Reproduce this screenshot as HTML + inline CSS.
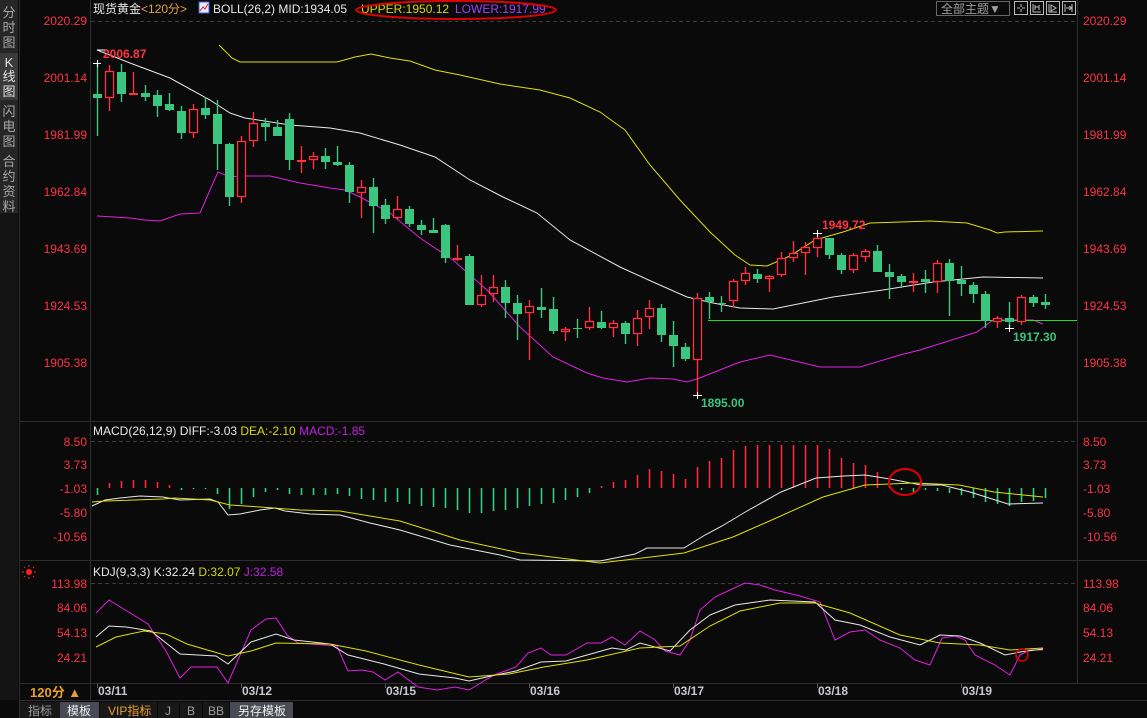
<!DOCTYPE html>
<html><head><meta charset="utf-8">
<style>
html,body{margin:0;padding:0;background:#0a0a0a;width:1147px;height:718px;overflow:hidden}
svg{display:block}
text{font-family:"Liberation Sans","Noto Sans CJK SC",sans-serif}
.c{shape-rendering:crispEdges}
</style></head><body>
<svg width="1147" height="718" viewBox="0 0 1147 718" xmlns="http://www.w3.org/2000/svg">
<rect width="1147" height="718" fill="#0a0a0a"/>
<!-- sidebar -->
<rect x="0" y="0" width="18" height="700" fill="#141414"/>
<rect x="0" y="0" width="18" height="213" fill="#262626"/>
<rect x="0" y="53" width="18" height="47" fill="#3a3a3a"/>
<g fill="#a8a8a8" font-size="13" text-anchor="middle">
<text x="9" y="17">分</text><text x="9" y="32">时</text><text x="9" y="47">图</text>
<text x="9" y="67" fill="#e0e0e0">K</text><text x="9" y="81" fill="#e0e0e0">线</text><text x="9" y="96" fill="#e0e0e0">图</text>
<text x="9" y="116">闪</text><text x="9" y="131">电</text><text x="9" y="146">图</text>
<text x="9" y="166">合</text><text x="9" y="181">约</text><text x="9" y="196">资</text><text x="9" y="211">料</text>
</g>
<!-- frame lines -->
<g stroke="#2e2e2e" stroke-width="1" class="c">
<line x1="90.5" y1="0" x2="90.5" y2="700"/>
<line x1="19.5" y1="0" x2="19.5" y2="718"/>
<line x1="1077.5" y1="0" x2="1077.5" y2="684"/>
<line x1="19" y1="421.5" x2="1147" y2="421.5"/>
<line x1="19" y1="560.5" x2="1147" y2="560.5"/>
<line x1="19" y1="683.5" x2="1147" y2="683.5"/>
<line x1="19" y1="700.5" x2="1147" y2="700.5"/>
</g>
<g stroke="#3a3a3a" stroke-dasharray="4,3" class="c">
<line x1="91" y1="21.5" x2="1077" y2="21.5"/>
<line x1="91" y1="441.5" x2="1077" y2="441.5"/>
<line x1="91" y1="583.5" x2="1077" y2="583.5"/>
</g>
<!-- header -->
<text x="93" y="13" font-size="12" fill="#e8e8e8">现货黄金<tspan fill="#e0a040">&lt;120分&gt;</tspan></text>
<rect x="199" y="2" width="10" height="11" fill="#e8e8ff" stroke="#4060d0"/>
<path d="M200 11L203 7L205 9L208 4" stroke="#d02020" fill="none"/>
<text x="213" y="13" font-size="12" fill="#e8e8e8">BOLL(26,2) MID:1934.05</text>
<text x="361" y="13" font-size="12" fill="#d8d800">UPPER:1950.12</text>
<text x="455" y="13" font-size="12" fill="#a040ff">LOWER:1917.99</text>
<ellipse cx="456" cy="10" rx="100" ry="9" fill="none" stroke="#e00000" stroke-width="2"/>
<!-- top right -->
<rect x="936.5" y="1.5" width="73" height="14" fill="none" stroke="#666"/>
<text x="941" y="13" font-size="12" fill="#a0a0a0">全部主题▼</text>
<g stroke="#bbb" fill="none">
<rect x="1014.5" y="1.5" width="13" height="13"/><path d="M1021 4v3M1021 9v3M1017 8h3M1022 8h3"/>
<rect x="1030.5" y="1.5" width="13" height="13"/><path d="M1033 4v8h8M1035 5v5M1039 5v5M1035 7h4"/>
<rect x="1046.5" y="1.5" width="13" height="13"/><path d="M1049 4v8h8M1051 5l5 3-5 3z"/>
<rect x="1062.5" y="1.5" width="13" height="13"/><path d="M1065 4v8M1066 8h5M1069 6l3 2-3 2M1072 4v8"/>
</g>
<!-- price axes -->
<g font-size="12" fill="#ff3344">
<g text-anchor="end">
<text x="87" y="25">2020.29</text><text x="87" y="82">2001.14</text><text x="87" y="139">1981.99</text><text x="87" y="196">1962.84</text><text x="87" y="253">1943.69</text><text x="87" y="310">1924.53</text><text x="87" y="367">1905.38</text>
<text x="87" y="446">8.50</text><text x="87" y="469">3.73</text><text x="87" y="493">-1.03</text><text x="87" y="517">-5.80</text><text x="87" y="541">-10.56</text>
<text x="87" y="588">113.98</text><text x="87" y="612">84.06</text><text x="87" y="637">54.13</text><text x="87" y="662">24.21</text>
</g>
<text x="1083" y="25">2020.29</text><text x="1083" y="82">2001.14</text><text x="1083" y="139">1981.99</text><text x="1083" y="196">1962.84</text><text x="1083" y="253">1943.69</text><text x="1083" y="310">1924.53</text><text x="1083" y="367">1905.38</text>
<text x="1083" y="446">8.50</text><text x="1083" y="469">3.73</text><text x="1083" y="493">-1.03</text><text x="1083" y="517">-5.80</text><text x="1083" y="541">-10.56</text>
<text x="1083" y="588">113.98</text><text x="1083" y="612">84.06</text><text x="1083" y="637">54.13</text><text x="1083" y="662">24.21</text>
</g>
<!-- bollinger -->
<polyline fill="none" stroke="#e0e000" points="219,45 232,58 240,62 337,62 355,57 371,54 390,58 410,61 435,70 460,75 500,84 540,90 570,98 600,112 625,130 650,165 680,200 710,232 735,255 750,265 767,266 790,256 815,240 843,232 870,223 930,221 967,223 990,230 997,233 1005,232 1043,231"/>
<polyline fill="none" stroke="#e8e8e8" points="97,50 130,63 170,78 210,100 230,113 245,118 290,125 330,128 360,133 400,145 435,157 470,180 503,197 537,213 570,240 620,267 653,282 687,297 713,303 740,308 773,309 833,297 883,290 933,282 983,277 1043,278"/>
<polyline fill="none" stroke="#e020e0" points="97,216 130,218 145,220 160,221 180,214 200,213 210,190 218,172 230,177 240,176 270,176 300,183 330,188 345,190 360,197 390,213 420,238 453,260 487,290 520,327 553,357 587,373 603,378 627,382 650,378 673,379 687,382 697,379 740,362 770,355 820,367 860,367 900,355 920,350 977,332 993,320 1033,320 1043,324"/>
<line x1="708" y1="320.5" x2="1077" y2="320.5" stroke="#20e020" class="c"/>
<!-- green candles -->
<g stroke="#3ac67f" fill="#3ac67f">
<path fill="none" stroke-width="1.4" d="M97.5 62V136M121.5 64V102M145.5 85V101M157.5 90V117M169.5 93V111M181.5 106V139M205.5 97V119M217.5 100V170M229.5 143V206M265.5 118V141M277.5 120V136M289.5 113V170M325.5 148V169M337.5 146V166M349.5 162V203M373.5 178V233M385.5 199V224M409.5 206V227M421.5 220V235M433.5 218V233M445.5 224V263M469.5 254V305M505.5 280V318M517.5 295V340M541.5 288V318M553.5 297V334M577.5 319V338M601.5 311V329M625.5 321V344M661.5 304V342M673.5 321V367M685.5 343V361M709.5 292V319M721.5 296V312M757.5 269V283M829.5 238V259M841.5 253V274M877.5 245V272M889.5 264V299M901.5 274V288M925.5 270V293M949.5 259V316M961.5 266V296M973.5 282V303M985.5 291V328M1009.5 302V328M1033.5 295V307M1045.5 294V309"/>
<g stroke="none">
<rect x="93" y="94" width="9" height="4"/><rect x="117" y="72" width="9" height="22"/><rect x="141" y="93" width="9" height="4"/><rect x="153" y="95" width="9" height="11"/><rect x="165" y="104" width="9" height="6"/><rect x="177" y="111" width="9" height="22"/><rect x="201" y="108" width="9" height="7"/><rect x="213" y="114" width="9" height="30"/><rect x="225" y="144" width="9" height="53"/><rect x="261" y="123" width="9" height="4"/><rect x="273" y="127" width="9" height="9"/><rect x="285" y="119" width="9" height="41"/><rect x="321" y="156" width="9" height="6"/><rect x="333" y="162" width="9" height="3"/><rect x="345" y="165" width="9" height="27"/><rect x="369" y="187" width="9" height="19"/><rect x="381" y="205" width="9" height="14"/><rect x="405" y="209" width="9" height="15"/><rect x="417" y="225" width="9" height="5"/><rect x="429" y="230" width="9" height="3"/><rect x="441" y="225" width="9" height="33"/><rect x="465" y="256" width="9" height="49"/><rect x="501" y="287" width="9" height="16"/><rect x="513" y="303" width="9" height="11"/><rect x="537" y="307" width="9" height="3"/><rect x="549" y="309" width="9" height="22"/><rect x="573" y="328" width="9" height="1"/><rect x="597" y="322" width="9" height="6"/><rect x="621" y="323" width="9" height="11"/><rect x="657" y="308" width="9" height="27"/><rect x="669" y="335" width="9" height="11"/><rect x="681" y="347" width="9" height="12"/><rect x="705" y="297" width="9" height="5"/><rect x="717" y="303" width="9" height="1"/><rect x="753" y="274" width="9" height="5"/><rect x="825" y="238" width="9" height="17"/><rect x="837" y="255" width="9" height="15"/><rect x="873" y="251" width="9" height="21"/><rect x="885" y="272" width="9" height="5"/><rect x="897" y="276" width="9" height="6"/><rect x="921" y="279" width="9" height="3"/><rect x="945" y="263" width="9" height="18"/><rect x="957" y="280" width="9" height="4"/><rect x="969" y="285" width="9" height="9"/><rect x="981" y="294" width="9" height="27"/><rect x="1005" y="318" width="9" height="4"/><rect x="1029" y="297" width="9" height="6"/><rect x="1041" y="302" width="9" height="3"/>
</g></g>
<!-- red candles -->
<g stroke="#ff3040">
<path fill="none" stroke-width="1.4" d="M109.5 65V111M133.5 72V94M193.5 104V138M241.5 136V203M253.5 112V147M301.5 146V173M313.5 152V169M361.5 180V218M397.5 196V220M457.5 245V261M481.5 275V307M493.5 275V302M529.5 300V360M565.5 327V341M589.5 307V330M613.5 320V337M637.5 310V346M649.5 300V329M697.5 293V395M733.5 279V307M745.5 267V285M769.5 275V292M781.5 252V277M793.5 241V262M805.5 242V275M817.5 233V257M853.5 253V273M865.5 249V262M913.5 273V292M937.5 260V293M997.5 316V328M1021.5 295V325"/>
<g fill="#0a0a0a" stroke-width="1.3">
<rect x="105.5" y="71.5" width="8" height="26"/><rect x="189.5" y="109.5" width="8" height="23"/><rect x="237.5" y="141.5" width="8" height="55"/><rect x="249.5" y="123.5" width="8" height="17"/><rect x="309.5" y="156.5" width="8" height="3"/><rect x="357.5" y="187.5" width="8" height="5"/><rect x="393.5" y="209.5" width="8" height="8"/><rect x="477.5" y="295.5" width="8" height="9"/><rect x="489.5" y="287.5" width="8" height="6"/><rect x="525.5" y="306.5" width="8" height="6"/><rect x="561.5" y="329.5" width="8" height="2"/><rect x="585.5" y="321.5" width="8" height="6"/><rect x="609.5" y="323.5" width="8" height="4"/><rect x="633.5" y="318.5" width="8" height="15"/><rect x="645.5" y="308.5" width="8" height="8"/><rect x="693.5" y="298.5" width="8" height="61"/><rect x="729.5" y="281.5" width="8" height="19"/><rect x="741.5" y="273.5" width="8" height="7"/><rect x="765.5" y="276.5" width="8" height="2"/><rect x="777.5" y="258.5" width="8" height="16"/><rect x="789.5" y="253.5" width="8" height="4"/><rect x="801.5" y="247.5" width="8" height="5"/><rect x="813.5" y="238.5" width="8" height="9"/><rect x="849.5" y="255.5" width="8" height="14"/><rect x="861.5" y="251.5" width="8" height="5"/><rect x="933.5" y="263.5" width="8" height="18"/><rect x="993.5" y="318.5" width="8" height="3"/><rect x="1017.5" y="297.5" width="8" height="24"/>
</g>
<g fill="#ff3040" stroke="none"><rect x="129" y="93" width="9" height="2"/><rect x="297" y="160" width="9" height="2"/><rect x="453" y="258" width="9" height="2"/><rect x="909" y="281" width="9" height="2"/></g>
</g>
<!-- markers -->
<g stroke="#fff" class="c"><path d="M93 63.5h8M97.5 60v7M693 395.5h9M697.5 392v7M813 233.5h9M817.5 230v7M1005 328.5h9M1009.5 325v7"/></g>
<path d="M97 50h10" stroke="#fff"/>
<g font-size="12" font-weight="bold">
<text x="103" y="58" fill="#ff3344">2006.87</text>
<text x="822" y="229" fill="#ff3344">1949.72</text>
<text x="701" y="407" fill="#3ac67f">1895.00</text>
<text x="1013" y="341" fill="#3ac67f">1917.30</text>
</g>
<!-- MACD -->
<text x="93" y="435" font-size="12" fill="#e8e8e8">MACD(26,12,9) DIFF:-3.03 <tspan fill="#d8d800">DEA:-2.10</tspan> <tspan fill="#c020e0">MACD:-1.85</tspan></text>
<path fill="none" stroke="#ff2838" stroke-width="1.6" d="M109.5 488V483M121.5 488V481M133.5 488V480M145.5 488V480M157.5 488V482M169.5 488V485M601.5 488V486M613.5 488V482M625.5 488V480M637.5 488V475M649.5 488V469M661.5 488V471M673.5 488V474M685.5 488V479M697.5 488V467M709.5 488V461M721.5 488V458M733.5 488V450M745.5 488V446M757.5 488V445M769.5 488V445M781.5 488V445M793.5 488V445M805.5 488V445M817.5 488V445M829.5 488V449M841.5 488V458M853.5 488V463M865.5 488V465M877.5 488V472M889.5 488V485"/>
<path fill="none" stroke="#30d080" stroke-width="1.6" d="M97.5 488V495M181.5 488V490M193.5 488V489M205.5 488V489M217.5 488V494M229.5 488V509M241.5 488V504M253.5 488V497M265.5 488V492M277.5 488V490M289.5 488V494M301.5 488V495M313.5 488V495M325.5 488V495M337.5 488V494M349.5 488V496M361.5 488V499M373.5 488V500M385.5 488V502M397.5 488V502M409.5 488V504M421.5 488V506M433.5 488V507M445.5 488V508M457.5 488V510M469.5 488V513M481.5 488V513M493.5 488V511M505.5 488V510M517.5 488V508M529.5 488V506M541.5 488V504M553.5 488V503M565.5 488V500M577.5 488V497M589.5 488V493M901.5 488V490M913.5 488V492M925.5 488V490M937.5 488V491M949.5 488V493M961.5 488V495M973.5 488V498M985.5 488V502M997.5 488V504M1009.5 488V506M1021.5 488V502M1033.5 488V501M1045.5 488V498"/>
<polyline fill="none" stroke="#e8e8e8" points="92,506 105,500 120,498 140,496 163,497 180,500 210,499 218,502 228,515 240,514 260,510 275,508 285,511 310,514 340,515 370,523 400,530 450,545 500,555 520,560 600,561 635,554 647,548 684,548 705,535 722,526 747,511 781,492 816,478 844,476 865,475 890,479 921,485 942,485 970,492 1008,504 1043,503"/>
<polyline fill="none" stroke="#e0e000" points="92,502 105,501 163,499 175,498 210,500 230,505 260,507 300,510 340,511 370,516 400,521 460,540 520,553 560,558 600,563 684,553 733,537 774,519 823,497 865,485 914,483 959,485 994,492 1043,497"/>
<ellipse cx="905" cy="482" rx="16" ry="13" fill="none" stroke="#e00000" stroke-width="2"/>
<!-- KDJ -->
<circle cx="29" cy="572" r="3" fill="#ff2020"/>
<path d="M29 565v2M29 577v2M22 572h2M34 572h2M24 567l1 1M34 567l-1 1M24 577l1-1M34 577l-1-1" stroke="#ff2020"/>
<text x="93" y="576" font-size="12" fill="#e8e8e8">KDJ(9,3,3) K:32.24 <tspan fill="#d8d800">D:32.07</tspan> <tspan fill="#c020e0">J:32.58</tspan></text>
<polyline fill="none" stroke="#e020e0" points="96,613 109,600 148,624 166,651 180,678 191,667 217,667 228,683 251,630 266,619 276,618 287,635 298,643 337,646 348,671 362,670 373,672 385,680 398,672 418,687 437,690 455,687 469,690 494,675 516,667 528,653 541,648 551,655 566,655 587,643 601,643 612,637 625,645 640,631 655,640 665,651 680,655 690,640 700,610 715,597 730,590 745,583 760,585 775,590 800,596 820,602 835,640 850,632 865,630 880,640 900,648 915,660 930,665 942,638 955,636 965,640 975,655 995,665 1010,675 1020,655 1030,650 1043,650"/>
<polyline fill="none" stroke="#e8e8e8" points="96,637 109,626 126,627 151,631 180,654 216,656 228,664 251,642 276,634 294,640 330,644 348,655 384,664 419,674 455,678 469,681 491,676 516,671 541,662 566,661 587,655 612,648 626,650 640,643 670,651 690,630 710,615 735,605 770,600 815,602 835,620 860,625 890,637 920,645 940,635 960,636 980,643 1005,655 1020,652 1043,649"/>
<polyline fill="none" stroke="#e0e000" points="96,647 116,637 144,631 166,634 187,644 228,656 251,651 276,643 330,644 366,651 419,665 469,677 509,674 544,667 587,660 640,648 680,646 710,626 740,611 780,603 815,603 850,613 900,635 940,643 980,645 1010,650 1043,648"/>
<circle cx="1022" cy="655" r="6" fill="none" stroke="#e00000" stroke-width="1.5"/>
<!-- date row -->
<text x="30" y="697" font-size="13" font-weight="bold" fill="#e8a030">120分 ▲</text>
<g stroke="#555" class="c"><path d="M97.5 684v4M241.5 684v4M385.5 684v4M529.5 684v4M673.5 684v4M817.5 684v4M961.5 684v4"/></g>
<g font-size="12" font-weight="bold" fill="#c8c8d0">
<text x="98" y="695">03/11</text><text x="242" y="695">03/12</text><text x="386" y="695">03/15</text><text x="530" y="695">03/16</text><text x="674" y="695">03/17</text><text x="818" y="695">03/18</text><text x="962" y="695">03/19</text>
</g>
<!-- bottom tabs -->
<rect x="20" y="702" width="40" height="16" fill="#181818"/>
<rect x="60" y="702" width="39" height="16" fill="#4a4a55"/>
<rect x="100" y="702" width="57" height="16" fill="#181818"/>
<rect x="158" y="702" width="21" height="16" fill="#181818"/>
<rect x="180" y="702" width="22" height="16" fill="#181818"/>
<rect x="203" y="702" width="26" height="16" fill="#181818"/>
<rect x="230" y="702" width="63" height="16" fill="#4a4a55"/>
<g font-size="12">
<text x="28" y="715" fill="#a0a0a0">指标</text>
<text x="67" y="715" fill="#f0f0f0">模板</text>
<text x="108" y="715" fill="#e8a030">VIP指标</text>
<text x="165" y="715" fill="#a0a0a0">J</text>
<text x="187" y="715" fill="#a0a0a0">B</text>
<text x="208" y="715" fill="#a0a0a0">BB</text>
<text x="238" y="715" fill="#f0f0f0">另存模板</text>
</g>
</svg>
</body></html>
